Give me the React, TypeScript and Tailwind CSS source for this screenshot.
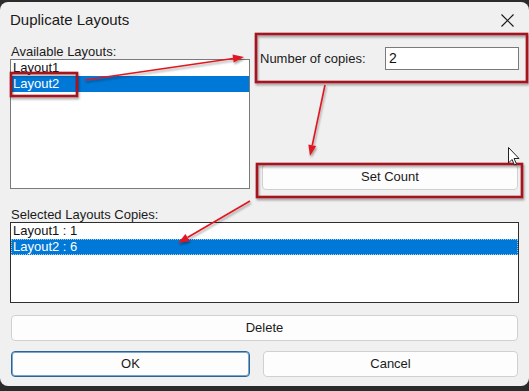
import React from "react";

const font = { fontFamily: '"Liberation Sans", Arial, sans-serif' };

const Arrow = ({ x1, y1, x2, y2 }: { x1: number; y1: number; x2: number; y2: number }) => {
  const a = Math.atan2(y2 - y1, x2 - x1);
  const len = 11;
  const w = 4;
  const bx = x2 - len * Math.cos(a);
  const by = y2 - len * Math.sin(a);
  const p1 = `${bx + w * Math.sin(a)},${by - w * Math.cos(a)}`;
  const p2 = `${bx - w * Math.sin(a)},${by + w * Math.cos(a)}`;
  return (
    <g>
      <line x1={x1} y1={y1} x2={bx} y2={by} stroke="#e01820" strokeWidth={1.6} />
      <polygon points={`${x2},${y2} ${p1} ${p2}`} fill="#e01820" />
    </g>
  );
};

const Annotations = () => (
  <svg className="absolute inset-0 pointer-events-none" width={529} height={391}>
    <defs>
      <filter id="sh" x="-10%" y="-10%" width="120%" height="130%">
        <feDropShadow dx="1" dy="2" stdDeviation="1.2" floodColor="#000" floodOpacity="0.35" />
      </filter>
    </defs>
    <g fill="none" stroke="#a3121c" strokeWidth={2.6} filter="url(#sh)">
      <rect x={11} y={73} width={66} height={23} />
      <rect x={256} y={34} width={271} height={48} />
      <rect x={257} y={164} width={265} height={33} />
    </g>
    <g filter="url(#sh)">
      <Arrow x1={85} y1={80} x2={244} y2={57} />
      <Arrow x1={325} y1={85} x2={310} y2={156} />
      <Arrow x1={250} y1={201} x2={178} y2={243} />
    </g>
    <path
      d="M508.5 147.5 L508.5 163 L512 159.5 L514.5 165 L516.5 164 L514 158.5 L519 158.5 Z"
      fill="#fff"
      stroke="#222"
      strokeWidth={1}
    />
  </svg>
);

const Button = ({ label, className = "" }: { label: string; className?: string }) => (
  <div
    className={`h-[26px] flex items-center justify-center rounded-[4px] bg-[#fdfdfd] border text-[13px] text-[#1a1a1a] ${className}`}
  >
    {label}
  </div>
);

export default function App() {
  return (
    <div className="relative w-[529px] h-[391px] bg-[#2b2b2b] pt-[2px] overflow-hidden" style={font}>
      <div className="h-[384px] rounded-[8px] bg-[#f0f0f0] flex flex-col">
        <div className="h-[37px] flex items-center justify-between pl-[10px] pr-[15px]">
          <span className="text-[15px] text-[#1a1a1a]">Duplicate Layouts</span>
          <svg width="13" height="13" viewBox="0 0 13 13">
            <path d="M0.5 0.5 L12.5 12.5 M12.5 0.5 L0.5 12.5" stroke="#1a1a1a" strokeWidth={1.2} />
          </svg>
        </div>

        <div className="flex pl-[10px]">
          <div className="w-[240px] flex flex-col">
            <div className="mt-[6px] text-[13px] leading-[14px] text-[#1a1a1a] pl-[1px]">Available Layouts:</div>
            <div className="h-[130px] border border-[#7a7a7a] bg-white text-[13px] leading-[16px]">
              <div className="pl-[2px] text-[#111]">Layout1</div>
              <div className="pl-[2px] bg-[#0078d7] text-white">Layout2</div>
            </div>
          </div>
          <div className="flex flex-col ml-[10px]">
            <div className="mt-[8px] flex items-center">
              <span className="w-[125px] text-[13px] text-[#1a1a1a]">Number of copies:</span>
              <div className="w-[134px] h-[23px] border border-[#7a7a7a] bg-white pl-[3px] text-[14px] leading-[20px] text-[#111]">
                2
              </div>
            </div>
            <Button label="Set Count" className="mt-[94px] ml-[2px] w-[256px] border-[#d0d0d0]" />
          </div>
        </div>

        <div className="pl-[10px] flex flex-col">
          <div className="mt-[18px] text-[13px] leading-[14px] text-[#1a1a1a] pl-[1px]">Selected Layouts Copies:</div>
          <div className="w-[509px] h-[81px] border border-[#2e2e2e] bg-white text-[13px] leading-[16px]">
            <div className="pl-[2px] text-[#111]">Layout1 : 1</div>
            <div className="pl-[1px] bg-[#0078d7] text-white border border-dotted border-[#9cc6ea] leading-[14px]">
              Layout2 : 6
            </div>
          </div>
          <Button label="Delete" className="mt-[12px] ml-[1px] w-[507px] border-[#d0d0d0]" />
          <div className="mt-[10px] ml-[1px] flex gap-[13px]">
            <Button label="OK" className="w-[239px] border-[#2d6497] shadow-[inset_0_0_0_1px_#7aa6cc]" />
            <Button label="Cancel" className="w-[255px] border-[#d0d0d0]" />
          </div>
        </div>
      </div>
      <Annotations />
    </div>
  );
}
